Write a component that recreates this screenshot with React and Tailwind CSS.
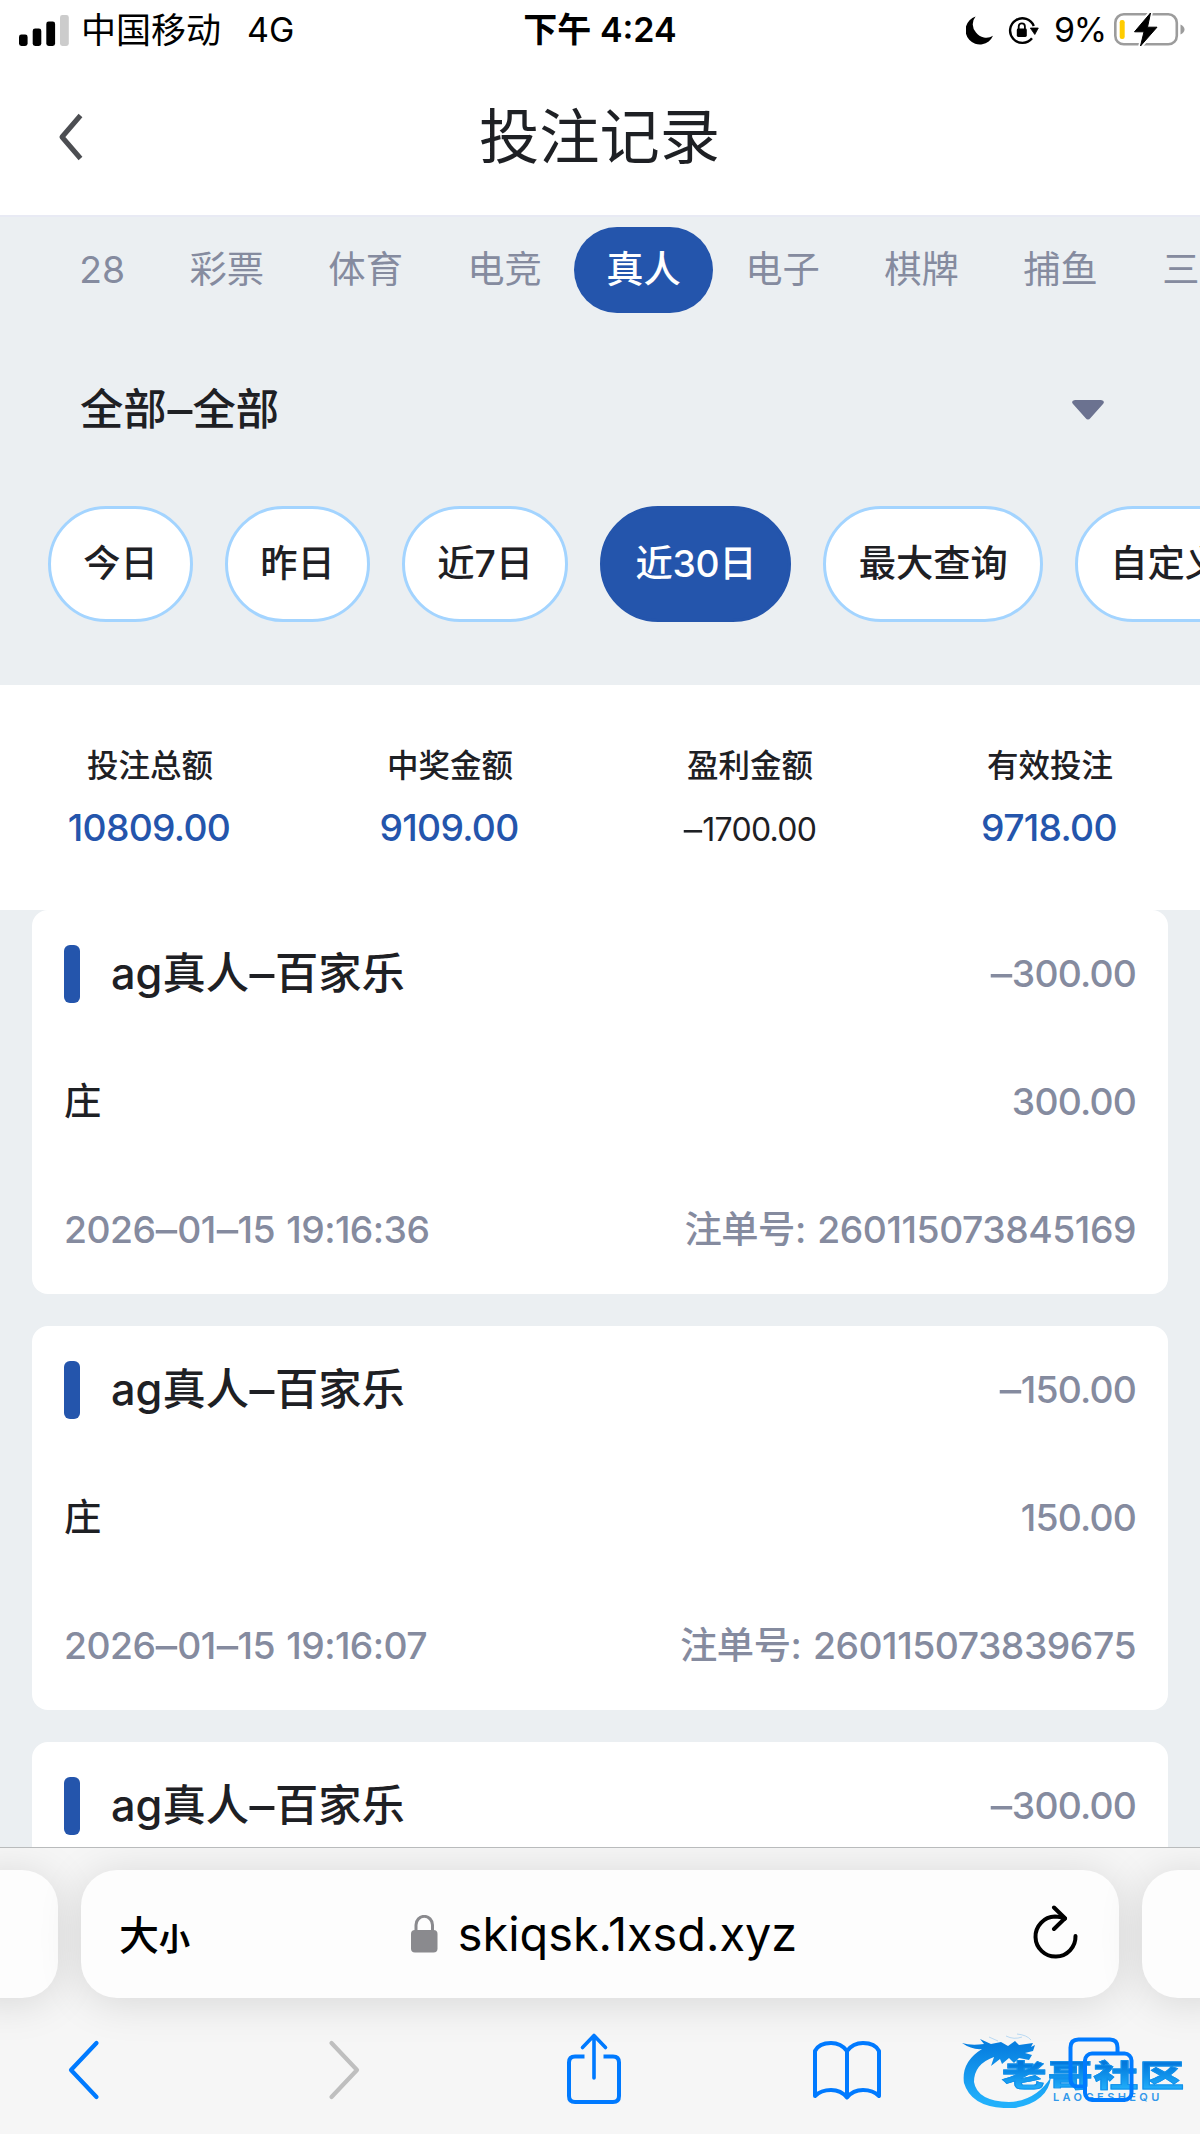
import React, { useState } from 'react';

const tabs = ['28', '彩票', '体育', '电竞', '真人', '电子', '棋牌', '捕鱼', '三方'];
const ranges = ['今日', '昨日', '近7日', '近30日', '最大查询', '自定义'];
const totals = [
  { label: '投注总额', value: '10809.00' },
  { label: '中奖金额', value: '9109.00' },
  { label: '盈利金额', value: '–1700.00', loss: true },
  { label: '有效投注', value: '9718.00' },
];
const records = [
  { id: '260115073845169', game: 'ag真人–百家乐', bet: '庄', profit: '–300.00', amount: '300.00', time: '2026–01–15 19:16:36' },
  { id: '260115073839675', game: 'ag真人–百家乐', bet: '庄', profit: '–150.00', amount: '150.00', time: '2026–01–15 19:16:07' },
  { game: 'ag真人–百家乐', profit: '–300.00' },
];

// widens the dashes a little, they are too tight next to the digits
const Dashed = ({ text }) => text.split('–').map((part, i) => (
  <React.Fragment key={i}>
    {i > 0 && <span className="inline-block scale-x-[1.15] mx-[0.05em]">–</span>}
    {part}
  </React.Fragment>
));

const StatusBar = () => (
  <div className="h-[60px] shrink-0 flex items-center justify-between pl-[19px] pr-[15px] text-black text-[34px] leading-none">
    <div className="flex items-center w-[480px]">
      <svg width="50" height="31" viewBox="0 0 50 31" className="mr-[12px]">
        <rect x="0" y="19.5" width="8.6" height="11.5" rx="2.4" />
        <rect x="13.7" y="13.5" width="8.6" height="17.5" rx="2.4" />
        <rect x="27.3" y="6.5" width="8.8" height="24.5" rx="2.4" />
        <rect x="41" y="0" width="8.8" height="31" rx="2.4" fill="#cccccc" />
      </svg>
      <span className="text-[35px]">中国移动</span>
      <span className="ml-[26px]">4G</span>
    </div>
    <div className="font-semibold whitespace-nowrap pr-[4px]">下午 4:24</div>
    <div className="flex items-center justify-end w-[480px]">
      <svg width="28" height="29" viewBox="0 0 28 29" className="mr-[14px]">
        <path d="M9.6 0.5A12 12 0 0 0 10 16.5A13 13 0 0 0 27 19.8A14.3 14.3 0 1 1 9.6 0.5Z" />
      </svg>
      <svg width="31" height="29" viewBox="0 0 31 29" className="mr-[15px]" fill="none" stroke="#000" strokeWidth="2.4">
        <path d="M25.8 10A12.3 12.3 0 1 0 24 22.3" />
        <path d="M22.3 12H30.3L26.8 18.5Z" fill="#000" strokeWidth="0.8" strokeLinejoin="round" />
        <rect x="8.8" y="12.5" width="10" height="8.5" rx="1.4" fill="#000" stroke="none" />
        <path d="M10.7 13V10.4A3.1 3.1 0 0 1 16.9 10.4V13" strokeWidth="1.8" />
      </svg>
      <span className="mr-[8px] tracking-[-1.2px]">9%</span>
      <svg width="71" height="35" viewBox="0 0 71 35" fill="none" className="-mt-px">
        <rect x="1.3" y="2.3" width="61.5" height="30" rx="8.5" stroke="#9c9c9c" strokeWidth="2.6" />
        <path d="M66.5 12.5Q70.5 14.3 70.5 17.5T66.5 22.5Z" fill="#9c9c9c" />
        <rect x="5.7" y="8" width="5" height="19" rx="2.2" fill="#ffcc00" />
        <path d="M36.5 1L20.5 19.8H30L26.5 34L43 15.2H33.5Z" fill="#000" stroke="#fff" strokeWidth="4.5" strokeLinejoin="round" />
        <path d="M36.5 1L20.5 19.8H30L26.5 34L43 15.2H33.5Z" fill="#000" stroke="#000" strokeWidth="1" strokeLinejoin="round" />
      </svg>
    </div>
  </div>
);

const Record = ({ item }) => (
  <div className="bg-white rounded-2xl px-8 shrink-0 text-[37.3px] text-[#858b9f] font-medium">
    <div className="h-32 flex items-center justify-between">
      <div className="flex items-center">
        <i className="w-4 h-[58px] rounded-md bg-[#2455ac]" />
        <span className="ml-[31px] -mt-[1px] text-[43.3px] text-[#1e2024]"><Dashed text={item.game} /></span>
      </div>
      <span className="tracking-[-0.8px]"><Dashed text={item.profit} /></span>
    </div>
    {item.id ? <>
      <div className="h-32 flex items-center justify-between">
        <span className="text-[#1e2024]">{item.bet}</span>
        <span className="tracking-[-0.8px]">{item.amount}</span>
      </div>
      <div className="h-32 flex items-center justify-between tracking-[-0.55px]">
        <span className="[word-spacing:2px]"><Dashed text={item.time} /></span>
        <span className="tracking-[-0.45px] [word-spacing:2px]">注单号: {item.id}</span>
      </div>
    </> : <div className="h-64" />}
  </div>
);

const Watermark = () => (
  <div className="absolute left-[962px] top-[185px] w-[225px] h-[75px]">
    <svg width="225" height="75" viewBox="0 0 225 75" className="absolute left-0 top-0">
      <defs>
        <linearGradient id="dragon" x1="0" y1="0" x2="0" y2="1">
          <stop offset="0.1" stopColor="#077fe0" />
          <stop offset="0.9" stopColor="#22b0fb" />
        </linearGradient>
      </defs>
      <path fill="url(#dragon)" d="M0 10Q9 13 22 11L18 6L29 11L39 9L46 13L53 8L57 12L71 10L69 14L73 12L71 18L63 20L70 22L67 27L57 25L52 30L47 25L40 31L38 26L29 33L32 24Q12 31 12 49Q15 68 47 69Q74 68 89 44Q86 69 53 75Q10 77 2 50Q-1 29 20 16Q10 17 0 10Z" />
      <path fill="none" stroke="#9fcdf0" strokeWidth="0.7" d="M27 4L36 8M44 3Q52 7 60 4M55 1Q65 2 69 7" />
    </svg>
    <div className="absolute left-[40px] top-[23px] text-[30px] leading-[38px] font-black tracking-[1px] whitespace-nowrap origin-left scale-x-[1.48] bg-linear-to-b from-[#0478dc] from-20% to-[#22b0fb] to-90% bg-clip-text text-transparent [-webkit-text-stroke:0.8px_#1290ea]">老哥社区</div>
    <div className="absolute left-[91px] top-[58px] text-[11px] leading-[12px] font-semibold tracking-[3.4px] text-[#3298ea]">LAOGESHEQU</div>
  </div>
);

const BrowserBar = () => (
  <div className="relative h-[287px] shrink-0 border-t border-[#b9bbbc] bg-[#f6f6f6] pt-[22px] overflow-hidden">
    <div className="flex gap-[23px] -ml-[42px] w-[1284px]">
      <div className="w-[100px] h-32 rounded-[36px] bg-[#fdfdfd] shadow-[0_4px_44px_rgba(0,0,0,0.13)]" />
      <div className="w-[1038px] h-32 rounded-[36px] bg-[#fdfdfd] shadow-[0_4px_44px_rgba(0,0,0,0.13)] flex items-center justify-between pl-[38px] pr-[41px] text-black">
        <div className="w-[200px] flex items-baseline font-medium leading-none pt-[3px]">
          <span className="text-[40px]">大</span>
          <span className="text-[31px] font-bold">小</span>
        </div>
        <div className="flex items-center pl-[11px] pt-px">
          <svg width="27" height="38" viewBox="0 0 27 38" className="mr-[20px] -mt-px">
            <rect x="0" y="15" width="26.5" height="22.5" rx="4" fill="#8a8a8e" />
            <path d="M5 17V10A8.2 8.6 0 0 1 21.5 10V17" fill="none" stroke="#8a8a8e" strokeWidth="3" />
          </svg>
          <span className="text-[46.8px] leading-none">skiqsk.1xsd.xyz</span>
        </div>
        <div className="w-[200px] flex justify-end">
          <svg width="46" height="54" viewBox="0 0 46 54" fill="none" stroke="#000" strokeWidth="4" strokeLinecap="round" strokeLinejoin="round" className="-mt-[4px]">
            <path d="M33 13.6Q28 11.6 23 11.6A20 20 0 1 0 43.5 31" />
            <path d="M22 2.5L33 13.3L22 24" />
          </svg>
        </div>
      </div>
      <div className="w-[100px] h-32 rounded-[36px] bg-[#fdfdfd] shadow-[0_4px_44px_rgba(0,0,0,0.13)]" />
    </div>

    <Watermark />
    <div className="relative h-[136px] flex items-center pl-[68px] pt-[7px] text-[#007aff]">
      <svg width="32" height="62" viewBox="0 0 32 62" fill="none" stroke="currentColor" strokeWidth="4.2" strokeLinecap="round" strokeLinejoin="round">
        <path d="M28.5 4L3 31L28.5 58" />
      </svg>
      <svg width="32" height="62" viewBox="0 0 32 62" className="ml-[228px]" fill="none" stroke="#bfbfbf" strokeWidth="4.2" strokeLinecap="round" strokeLinejoin="round">
        <path d="M3.5 4L29 31L3.5 58" />
      </svg>
      <svg width="56" height="74" viewBox="0 0 56 74" className="ml-[206px] -mt-[4px]" fill="none" stroke="currentColor" strokeWidth="4" strokeLinecap="round" strokeLinejoin="round">
        <path d="M18.5 25.5H9Q3 25.5 3 31.5V65Q3 71 9 71H47Q53 71 53 65V31.5Q53 25.5 47 25.5H37.5" strokeLinecap="butt" />
        <path d="M28 47V5M16.5 16.5L28 4.5L39.5 16.5" strokeWidth="3.6" />
      </svg>
      <svg width="70" height="60" viewBox="0 0 70 60" className="ml-[190px]" fill="none" stroke="currentColor" strokeWidth="4" strokeLinecap="round" strokeLinejoin="round">
        <path d="M35 11Q29 3 19 3Q7 3 3 11V56Q9 50 19 50Q29 50 35 57.5Q41 50 51 50Q61 50 67 56V11Q63 3 51 3Q41 3 35 11V57" />
      </svg>
      <svg width="66" height="66" viewBox="0 0 66 66" className="ml-[186px]" fill="none" stroke="currentColor" strokeWidth="4">
        <path d="M17 49.5H10Q2.5 49.5 2.5 42V10.5Q2.5 2.5 10.5 2.5H42Q49.5 2.5 49.5 10.5V16.5" />
        <rect x="17" y="16.5" width="46.5" height="46.5" rx="7" />
      </svg>
    </div>
  </div>
);

const App = () => {
  const [tab, setTab] = useState('真人'), [range, setRange] = useState('近30日');

  return (
    <div className="w-[1200px] h-[2134px] flex flex-col overflow-hidden bg-[#ebeff2] font-['Inter','Noto_Sans_CJK_SC',sans-serif]">
      <div className="bg-white h-[215px] shrink-0 flex flex-col">
        <StatusBar />
        <div className="flex-1 flex items-center px-[58px] pb-[2px]">
          <svg width="26" height="48" viewBox="0 0 26 48" fill="none" stroke="#4c4e52" strokeWidth="5" strokeLinejoin="round">
            <path d="M22.5 2.5L4 24L22.5 45.5" />
          </svg>
          <h1 className="flex-1 pr-[27px] pt-[3px] text-center text-[60.3px] leading-none text-[#1e2024]">投注记录</h1>
        </div>
      </div>

      <div className="h-[470px] shrink-0 border-t-2 border-[#e8eaf4]">
        <div className="flex pl-[47px] pt-[10px] overflow-hidden">
          {tabs.map(t => (
            <button key={t} onClick={() => setTab(t)}
              className={`h-[86px] px-[32.2px] shrink-0 rounded-full text-[37.3px] whitespace-nowrap ${t === tab ? 'bg-[#2455ac] text-white font-medium' : 'text-[#858b9f]'}`}>{t}</button>
          ))}
        </div>

        <div className="h-[193px] flex items-center justify-between pl-20 pr-24">
          <span className="text-[43.3px] font-medium text-[#1e2024]"><Dashed text="全部–全部" /></span>
          <svg width="32" height="20" viewBox="0 0 32 20" fill="#6b7290">
            <path d="M3 0H29Q33.5 0.5 31 4L18.5 18Q16 21 13.5 18L1 4Q-1.5 0.5 3 0Z" />
          </svg>
        </div>

        <div className="flex gap-8 pl-12 overflow-hidden">
          {ranges.map(r => (
            <button key={r} onClick={() => setRange(r)}
              className={`h-[116px] px-[32.2px] shrink-0 rounded-full border-3 text-[37.3px] font-medium whitespace-nowrap ${r === range ? 'bg-[#2455ac] border-[#2455ac] text-white tracking-[-0.3px]' : 'bg-white border-[#a3d4ff] text-[#1e2024]'}`}>{r}</button>
          ))}
        </div>
      </div>

      <div className="h-[225px] shrink-0 bg-white grid grid-cols-4 pt-[56px] text-center font-medium">
        {totals.map(t => (
          <div key={t.label}>
            <div className="h-[50px] text-[31.5px] leading-[50px] text-[#1e2024]">{t.label}</div>
            {t.loss
              ? <div className="mt-[14px] text-[32px] leading-[50px] font-normal tracking-[-0.7px] text-[#1e2024]"><Dashed text={t.value} /></div>
              : <div className="mt-[12px] pr-[2px] text-[37.3px] leading-[50px] tracking-[-0.7px] text-[#2455ac]">{t.value}</div>}
          </div>
        ))}
      </div>

      <div className="flex-1 min-h-0 overflow-hidden flex flex-col gap-8 px-8">
        {records.map((item, i) => <Record key={i} item={item} />)}
      </div>

      <BrowserBar />
    </div>
  );
};

export default App;
